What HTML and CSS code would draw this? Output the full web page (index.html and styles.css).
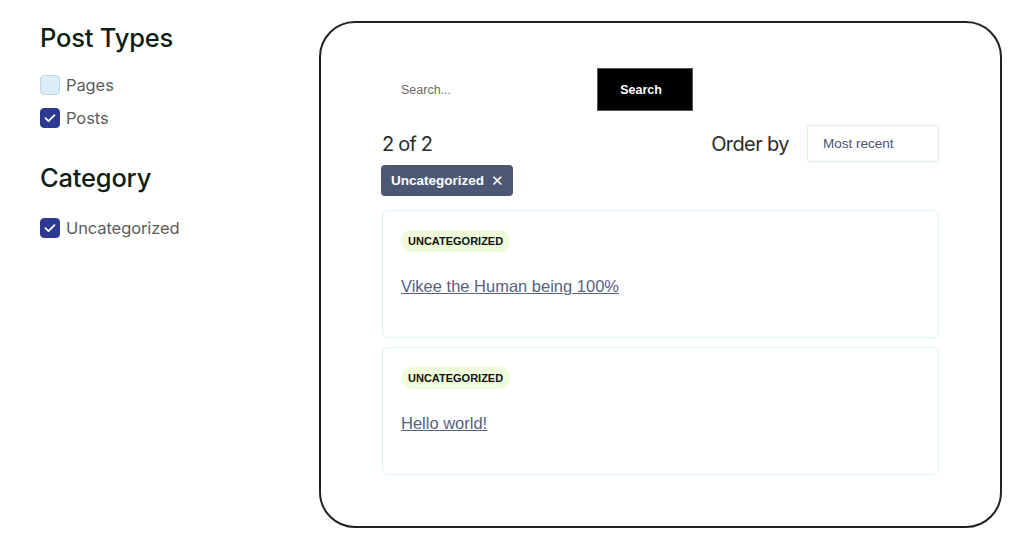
FILE: index.html
```html
<!DOCTYPE html>
<html>
<head>
<meta charset="utf-8">
<link rel="stylesheet" href="styles.css">
</head>
<body>
<div class="page">
  <aside class="sidebar">
    <h2 class="heading">Post Types</h2>
    <ul class="checks">
      <li class="check"><span class="box"></span><span class="label">Pages</span></li>
      <li class="check"><span class="box checked"><svg viewBox="0 0 20 20" width="20" height="20"><path d="M5 10.2l3.3 3.3L15 6.8" fill="none" stroke="#fff" stroke-width="2" stroke-linecap="round" stroke-linejoin="round"/></svg></span><span class="label">Posts</span></li>
    </ul>
    <h2 class="heading cat">Category</h2>
    <ul class="checks">
      <li class="check"><span class="box checked"><svg viewBox="0 0 20 20" width="20" height="20"><path d="M5 10.2l3.3 3.3L15 6.8" fill="none" stroke="#fff" stroke-width="2" stroke-linecap="round" stroke-linejoin="round"/></svg></span><span class="label">Uncategorized</span></li>
    </ul>
  </aside>
  <main class="panel">
    <form class="search">
      <input class="search-input" type="text" placeholder="Search...">
      <button class="search-btn" type="button">Search</button>
    </form>
    <div class="toolbar">
      <div class="count">2 of 2</div>
      <div class="order">
        <span class="order-label">Order by</span>
        <div class="select">Most recent</div>
      </div>
    </div>
    <div class="tags">
      <span class="tag">Uncategorized <span class="x">✕</span></span>
    </div>
    <div class="results">
      <article class="card">
        <span class="badge">UNCATEGORIZED</span>
        <a class="title" href="#">Vikee the Human being 100%</a>
      </article>
      <article class="card">
        <span class="badge">UNCATEGORIZED</span>
        <a class="title" href="#">Hello world!</a>
      </article>
    </div>
  </main>
</div>
</body>
</html>
```

FILE: styles.css
```css
* { box-sizing: border-box; }
html, body { margin: 0; padding: 0; background: #fff; }
body { font-family: "Inter", "Liberation Sans", sans-serif; }

.page {
  display: flex;
  padding: 21px 0 0 40px;
  height: 536px;
}

.sidebar { width: 279px; flex: none; }

.heading {
  margin: 0;
  font-family: "Inter", sans-serif;
  font-weight: 500;
  font-size: 25.5px;
  line-height: 34px;
  color: #0f1e14;
  letter-spacing: -0.2px;
}
.heading.cat { margin-top: 33px; }

.checks { list-style: none; margin: 0; padding: 0; margin-top: 20px; }
.cat + .checks { margin-top: 23px; }
.check { display: flex; align-items: center; height: 20px; margin-bottom: 13px; }
.box {
  width: 20px; height: 20px; border-radius: 4px;
  background: #dcedfa; border: 1px solid #bcd6ea;
  display: flex; align-items: center; justify-content: center;
  flex: none;
}
.box.checked { background: #2e3991; border-color: #2e3991; }
.box svg { display: block; }
.label {
  margin-left: 6px;
  font-size: 16.5px;
  color: #5d5d5d;
  font-family: "Inter", sans-serif;
  letter-spacing: -0.1px;
}

.panel {
  width: 683px;
  height: 507px;
  border: 2px solid #222;
  border-radius: 36px;
  padding: 45px 61px 0 61px;
}

.search { display: flex; height: 43px; }
.search-input {
  width: 215px; height: 43px;
  border: none; outline: none;
  padding: 0 0 0 19px;
  font-family: "Liberation Sans", sans-serif;
  font-size: 12.5px;
  color: #666;
}
.search-input::placeholder { color: #6b6b6b; }
.search-btn {
  width: 96px; height: 43px;
  background: #000; color: #fff;
  border: 1px solid #555;
  padding: 0 8px 0 0;
  font-family: "Liberation Sans", sans-serif;
  font-weight: bold; font-size: 12.5px;
}

.toolbar {
  display: flex; justify-content: space-between; align-items: center;
  margin-top: 14px;
  height: 37px;
}
.count {
  font-family: "Inter", sans-serif;
  font-size: 20px; color: #2b2b2b; letter-spacing: -0.8px;
}
.order { display: flex; align-items: center; }
.order-label {
  font-family: "Inter", sans-serif;
  font-size: 20px; color: #2b2b2b; letter-spacing: -0.6px;
  margin-right: 18px;
}
.select {
  width: 132px; height: 37px;
  border: 1px solid #dcf3dc;
  border-radius: 2px;
  padding-left: 15px;
  display: flex; align-items: center;
  font-family: "Liberation Sans", sans-serif;
  font-size: 13.5px; color: #4a5570;
}

.tags { margin-top: 3px; display: flex; }
.tag {
  display: inline-flex; align-items: center;
  height: 31px; padding: 0 9px 0 10px;
  background: #4c5773; color: #fff;
  border-radius: 4px;
  font-family: "Liberation Sans", sans-serif;
  font-weight: bold; font-size: 13.5px;
  margin-left: -1px;
}
.tag .x { font-weight: normal; font-size: 15px; margin-left: 7px; }

.results { margin-top: 14px; display: flex; flex-direction: column; gap: 9px; }
.card {
  height: 128px;
  border: 1px solid #ddf6df;
  border-radius: 6px;
  padding: 19px 18px 0 18px;
  display: flex; flex-direction: column; align-items: flex-start;
}
.badge {
  display: inline-block;
  background: #eefcdb;
  border-radius: 12px;
  padding: 0 7px;
  height: 22px; line-height: 22px;
  font-family: "Liberation Sans", sans-serif;
  font-weight: bold; font-size: 11px; color: #111;
}
.title {
  margin-top: 25px;
  font-family: "Liberation Sans", sans-serif;
  font-size: 16.5px; color: #56627e;
  text-decoration: underline;
}
```
